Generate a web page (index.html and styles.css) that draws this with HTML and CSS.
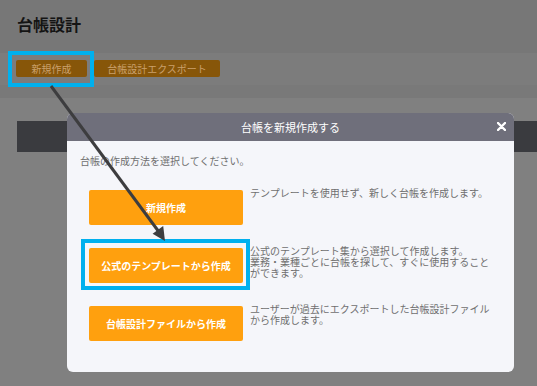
FILE: index.html
```html
<!DOCTYPE html>
<html lang="ja">
<head>
<meta charset="utf-8">
<link rel="stylesheet" href="styles.css">
</head>
<body>
<div class="page">
  <header class="header"><h1 class="title">台帳設計</h1></header>
  <div class="toolbar">
    <button class="tbtn tbtn-new hl">新規作成</button>
    <button class="tbtn tbtn-export">台帳設計エクスポート</button>
  </div>
  <div class="strip"></div>
  <div class="content"><div class="darkbar"></div></div>
</div>

<div class="modal">
  <div class="modal-head">
    <span class="modal-title">台帳を新規作成する</span>
    <svg class="close" width="9" height="9" viewBox="0 0 9 9"><path d="M1 1L8 8M8 1L1 8" stroke="#fff" stroke-width="2.4" stroke-linecap="round"/></svg>
  </div>
  <div class="modal-body">
    <p class="lead">台帳の作成方法を選択してください。</p>
    <div class="opts">
      <div class="opt">
        <button class="obtn">新規作成</button>
        <p class="odesc">テンプレートを使用せず、新しく台帳を作成します。</p>
      </div>
      <div class="opt">
        <button class="obtn hl">公式のテンプレートから作成</button>
        <p class="odesc">公式のテンプレート集から選択して作成します。<br>業務・業種ごとに台帳を探して、すぐに使用することができます。</p>
      </div>
      <div class="opt">
        <button class="obtn">台帳設計ファイルから作成</button>
        <p class="odesc">ユーザーが過去にエクスポートした台帳設計ファイルから作成します。</p>
      </div>
    </div>
  </div>
</div>

<svg class="arrow" width="537" height="386" viewBox="0 0 537 386">
  <line x1="51" y1="86" x2="159" y2="232" stroke="#3d3d3f" stroke-width="3"/>
  <polygon points="165,241 152.6,233.8 163.2,226" fill="#3d3d3f"/>
</svg>
</body>
</html>
```
FILE: styles.css
```css
* { box-sizing: border-box; }
html, body { margin: 0; padding: 0; }
body {
  width: 537px;
  height: 386px;
  overflow: hidden;
  background: #808080;
  font-family: "Noto Sans CJK JP", "Noto Sans", sans-serif;
  position: relative;
}
.header {
  height: 53px;
  background: #777777;
  padding: 13px 0 0 17px;
}
.title {
  margin: 0;
  font-size: 16px;
  line-height: 22px;
  font-weight: 700;
  color: #141414;
}
.toolbar {
  height: 32px;
  background: #7c7c7c;
  display: flex;
  align-items: flex-start;
  gap: 7px;
  padding: 7px 0 0 16px;
}
.tbtn {
  height: 17px;
  border: 0;
  border-radius: 2px;
  background: #875609;
  color: #caa06c;
  font-family: inherit;
  font-size: 10px;
  line-height: 17px;
  padding: 0;
  white-space: nowrap;
}
.tbtn-new { width: 71px; }
.tbtn-export { width: 126px; }
.hl { position: relative; }
.hl::after {
  content: "";
  position: absolute;
  border: 4px solid #00b0ee;
  pointer-events: none;
}
.tbtn.hl::after {
  left: -8px; right: -7px; top: -9px; bottom: -10px;
}
.strip {
  height: 13px;
  background: #797979;
}
.content {
  padding: 23px 0 0 17px;
}
.darkbar {
  height: 31px;
  background: #3a3b3f;
}
.modal {
  position: absolute;
  left: 67px;
  top: 113px;
  width: 447px;
  height: 259px;
  background: #f5f6fa;
  border-radius: 6px;
  overflow: hidden;
}
.modal-head {
  height: 28px;
  background: #6f6f7b;
  display: flex;
  align-items: center;
  justify-content: center;
  position: relative;
}
.modal-title {
  color: #ffffff;
  font-size: 11px;
  line-height: 14px;
}
.close {
  position: absolute;
  right: 8px;
  top: 9px;
}
.modal-body {
  padding: 13px 13px 0 13px;
}
.lead {
  margin: 0;
  font-size: 10px;
  line-height: 14px;
  color: #6f6f6f;
}
.opts {
  margin-top: 22px;
  padding-left: 9px;
  display: flex;
  flex-direction: column;
  gap: 23px;
}
.opt {
  display: flex;
  align-items: flex-start;
  gap: 7px;
}
.obtn {
  flex: 0 0 154px;
  height: 35px;
  border: 0;
  border-radius: 2px;
  background: #ffa00e;
  color: #ffffff;
  font-family: inherit;
  font-size: 10px;
  font-weight: 700;
  padding: 0;
}
.obtn.hl::after {
  left: -8px; right: -7px; top: -9px; bottom: -7px;
}
.odesc {
  margin: -3px 0 0 0;
  width: 246px;
  font-size: 10px;
  line-height: 11px;
  color: #6f6f6f;
}
.arrow {
  position: absolute;
  left: 0;
  top: 0;
  pointer-events: none;
}
```
